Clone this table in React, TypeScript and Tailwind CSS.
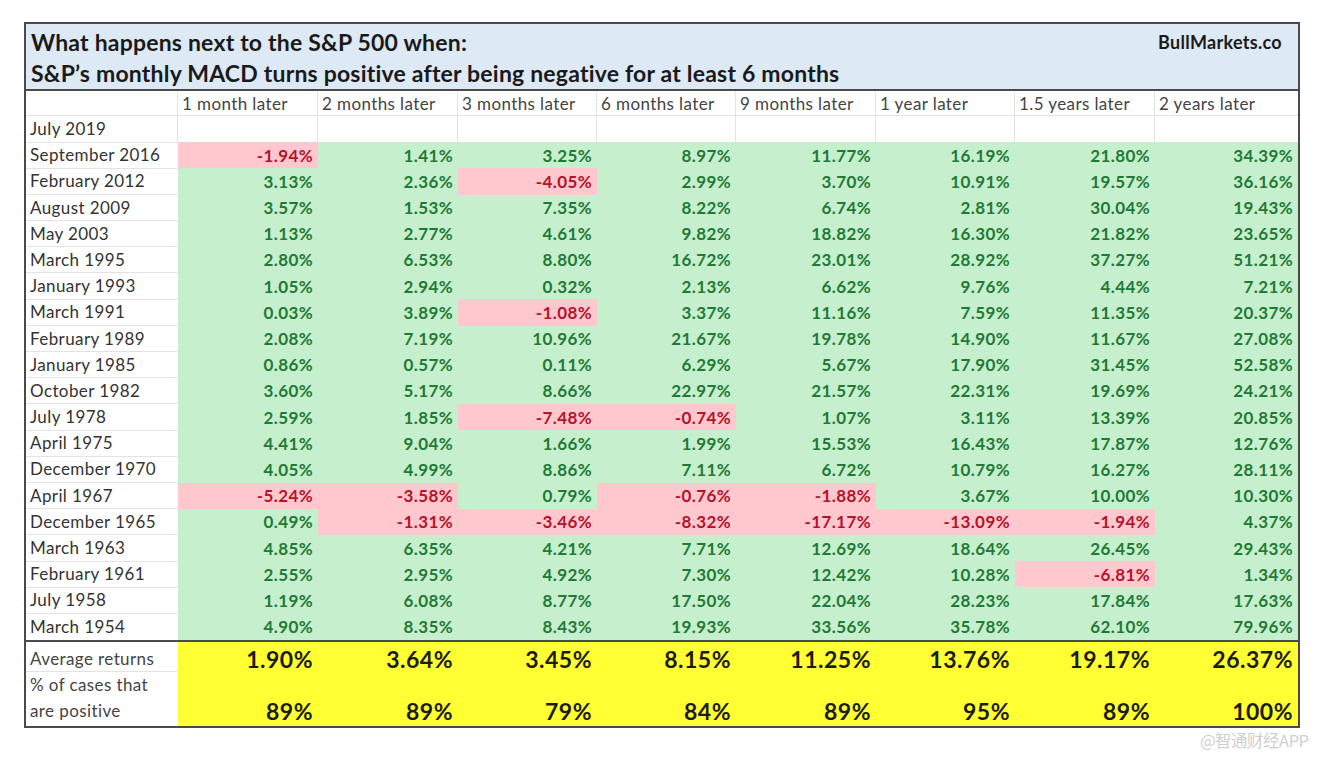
import React from "react";

const cols = ["1 month later", "2 months later", "3 months later", "6 months later", "9 months later", "1 year later", "1.5 years later", "2 years later"];

const rows: [string, string[]][] = [
  ["September 2016", ["-1.94", "1.41", "3.25", "8.97", "11.77", "16.19", "21.80", "34.39"]],
  ["February 2012", ["3.13", "2.36", "-4.05", "2.99", "3.70", "10.91", "19.57", "36.16"]],
  ["August 2009", ["3.57", "1.53", "7.35", "8.22", "6.74", "2.81", "30.04", "19.43"]],
  ["May 2003", ["1.13", "2.77", "4.61", "9.82", "18.82", "16.30", "21.82", "23.65"]],
  ["March 1995", ["2.80", "6.53", "8.80", "16.72", "23.01", "28.92", "37.27", "51.21"]],
  ["January 1993", ["1.05", "2.94", "0.32", "2.13", "6.62", "9.76", "4.44", "7.21"]],
  ["March 1991", ["0.03", "3.89", "-1.08", "3.37", "11.16", "7.59", "11.35", "20.37"]],
  ["February 1989", ["2.08", "7.19", "10.96", "21.67", "19.78", "14.90", "11.67", "27.08"]],
  ["January 1985", ["0.86", "0.57", "0.11", "6.29", "5.67", "17.90", "31.45", "52.58"]],
  ["October 1982", ["3.60", "5.17", "8.66", "22.97", "21.57", "22.31", "19.69", "24.21"]],
  ["July 1978", ["2.59", "1.85", "-7.48", "-0.74", "1.07", "3.11", "13.39", "20.85"]],
  ["April 1975", ["4.41", "9.04", "1.66", "1.99", "15.53", "16.43", "17.87", "12.76"]],
  ["December 1970", ["4.05", "4.99", "8.86", "7.11", "6.72", "10.79", "16.27", "28.11"]],
  ["April 1967", ["-5.24", "-3.58", "0.79", "-0.76", "-1.88", "3.67", "10.00", "10.30"]],
  ["December 1965", ["0.49", "-1.31", "-3.46", "-8.32", "-17.17", "-13.09", "-1.94", "4.37"]],
  ["March 1963", ["4.85", "6.35", "4.21", "7.71", "12.69", "18.64", "26.45", "29.43"]],
  ["February 1961", ["2.55", "2.95", "4.92", "7.30", "12.42", "10.28", "-6.81", "1.34"]],
  ["July 1958", ["1.19", "6.08", "8.77", "17.50", "22.04", "28.23", "17.84", "17.63"]],
  ["March 1954", ["4.90", "8.35", "8.43", "19.93", "33.56", "35.78", "62.10", "79.96"]],
];

const avg = ["1.90%", "3.64%", "3.45%", "8.15%", "11.25%", "13.76%", "19.17%", "26.37%"];
const pct = ["89%", "89%", "79%", "84%", "89%", "95%", "89%", "100%"];

const grid = "grid grid-cols-[152px_140px_140px_139px_139px_140px_139px_140px_1fr]";

export default function App() {
  return (
    <div className="w-[1318px] h-[758px] bg-white font-['Lato',sans-serif] text-[#333] relative overflow-hidden">
      <div className="pt-[22px] pl-[24px]">
        <div className="w-[1276px] h-[706px] border-2 border-[#4a4a4a] flex flex-col">
          {/* title */}
          <div className="h-[67px] bg-[#dde9f5] border-b-2 border-[#4a4a4a] flex flex-col pl-[5px] pr-[16px] pt-[3px] text-[#1a1a1a]">
            <div className="flex items-center justify-between h-[31px]">
              <span className="text-[23px] font-bold tracking-[0.2px]">What happens next to the S&amp;P 500 when:</span>
              <span className="text-[18px] font-bold tracking-[0.3px]">BullMarkets.co</span>
            </div>
            <div className="flex items-center h-[30px]">
              <span className="text-[23px] font-bold tracking-[0.2px]">S&amp;P’s monthly MACD turns positive after being negative for at least 6 months</span>
            </div>
          </div>
          {/* column headers */}
          <div className={`${grid} h-[25px] border-b border-[#e3e3e3]`}>
            <div className="border-r border-[#e3e3e3]" />
            {cols.map((c, i) => (
              <div key={c} className={`pl-[4px] flex items-center text-[17px] tracking-[0.4px] text-[#444] ${i < 7 ? "border-r border-[#e3e3e3]" : ""}`}>{c}</div>
            ))}
          </div>
          {/* July 2019 */}
          <div className={`${grid} h-[26.2px]`}>
            <div className="pl-[4px] flex items-center text-[17px] tracking-[0.4px] border-r border-b border-[#e3e3e3]">July 2019</div>
            {cols.map((c, i) => (
              <div key={c} className={`border-b border-[#e3e3e3] ${i < 7 ? "border-r" : ""}`} />
            ))}
          </div>
          {rows.map(([label, vals], ri) => (
            <div key={label} className={`${grid} h-[26.2px]`}>
              <div className={`pl-[4px] flex items-center text-[17px] tracking-[0.4px] border-[#e3e3e3] ${ri < rows.length - 1 ? "border-b" : ""}`}>{label}</div>
              {vals.map((v, i) => {
                const neg = v.startsWith("-");
                return (
                  <div
                    key={i}
                    className={`flex items-center justify-end pr-[5px] text-[17px] tracking-[0.4px] font-bold ${neg ? "bg-[#ffc7ce] text-[#b3132b]" : "bg-[#c6efce] text-[#1f7a35]"}`}
                  >
                    {v}%
                  </div>
                );
              })}
            </div>
          ))}
          {/* summary */}
          <div className={`${grid} flex-1 border-t-2 border-[#4a4a4a]`}>
            <div className="flex flex-col pt-[4px] text-[17px] tracking-[0.4px] text-[#444]">
              <div className="h-[26px] pl-[4px] flex items-center border-b border-[#e3e3e3]">Average returns</div>
              <div className="h-[26px] pl-[4px] flex items-center">% of cases that</div>
              <div className="h-[26px] pl-[4px] flex items-center">are positive</div>
            </div>
            {avg.map((a, i) => (
              <div key={i} className="bg-[#ffff33] flex flex-col pt-[4px] pr-[5px] text-[23px] tracking-[0.5px] font-bold text-[#1c1c0a]">
                <div className="h-[26px] flex items-center justify-end">{a}</div>
                <div className="h-[26px]" />
                <div className="h-[26px] flex items-center justify-end">{pct[i]}</div>
              </div>
            ))}
          </div>
        </div>
      </div>
      <div className="absolute left-[1200px] top-[728px] text-[16.5px] text-[#cfcfcf] font-['Noto_Sans_CJK_SC',sans-serif] tracking-[-0.5px]">@智通财经APP</div>
    </div>
  );
}
